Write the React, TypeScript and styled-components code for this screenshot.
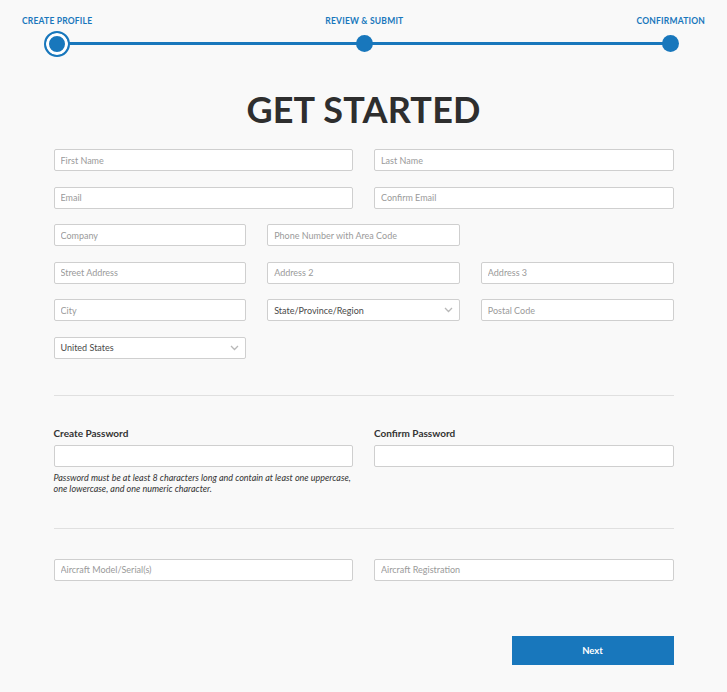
import React from 'react'
import styled, { createGlobalStyle } from 'styled-components'

const BLUE = '#1877bc'

const GlobalStyle = createGlobalStyle`
  html, body {
    margin: 0;
    padding: 0;
    background: #f9f9f9;
  }
  body {
    font-family: Lato, 'Open Sans', Arial, sans-serif;
    color: #333;
  }
  * {
    box-sizing: border-box;
  }
`

const Page = styled.div`
  width: 727px;
  min-height: 692px;
  background: #f9f9f9;
  padding-top: 16px;
`

const Stepper = styled.div`
  position: relative;
  display: flex;
  justify-content: space-between;
  padding: 0 22px;
`

const StepLine = styled.div`
  position: absolute;
  top: 26px;
  left: 57px;
  right: 57px;
  height: 3px;
  background: ${BLUE};
`

const Step = styled.div`
  position: relative;
  display: flex;
  flex-direction: column;
  align-items: center;
`

const StepLabel = styled.div`
  font-size: 8.5px;
  font-weight: 700;
  color: ${BLUE};
  letter-spacing: 0.2px;
  line-height: 10px;
  height: 10px;
  white-space: nowrap;
`

const StepDot = styled.div<{ current?: boolean }>`
  margin-top: ${({ current }) => (current ? '5px' : '9px')};
  width: ${({ current }) => (current ? '26px' : '17px')};
  height: ${({ current }) => (current ? '26px' : '17px')};
  border-radius: 50%;
  background: ${BLUE};
  border: ${({ current }) => (current ? `2px solid ${BLUE}` : 'none')};
  box-shadow: ${({ current }) => (current ? 'inset 0 0 0 3px #fff' : 'none')};
`

const Title = styled.h1`
  margin: 32px 0 0;
  text-align: center;
  font-size: 36px;
  font-weight: 700;
  letter-spacing: 0.2px;
  line-height: 40px;
  color: #2e2e2e;
`

const Form = styled.form`
  width: 620px;
  margin: 20px auto 0;
`

const Grid = styled.div`
  display: grid;
  grid-template-columns: repeat(6, 1fr);
  column-gap: 21px;
  row-gap: 15.6px;
`

const Cell = styled.div<{ span: number }>`
  grid-column: span ${({ span }) => span};
  display: flex;
  flex-direction: column;
`

const Input = styled.input`
  width: 100%;
  height: 22px;
  border: 1px solid #cfcfcf;
  border-radius: 2px;
  background: #fff;
  padding: 0 6px;
  font-family: Lato, 'Open Sans', Arial, sans-serif;
  font-size: 9px;
  color: #444;
  outline: none;
  &::placeholder {
    color: #9a9a9a;
  }
`

const SelectBox = styled.div`
  display: flex;
  align-items: center;
  justify-content: space-between;
  height: 22px;
  border: 1px solid #cfcfcf;
  border-radius: 2px;
  background: #fff;
  padding: 0 6px;
  font-size: 9px;
  color: #4a4a4a;
`

const Divider = styled.hr`
  border: none;
  border-top: 1px solid #e0e0e0;
  margin: 0;
`

const Section = styled.div<{ top: number }>`
  margin-top: ${({ top }) => top}px;
`

const Label = styled.label`
  font-size: 10px;
  font-weight: 700;
  color: #333;
  line-height: 12px;
  margin-bottom: 6px;
`

const Hint = styled.p`
  margin: 5px 0 0;
  font-size: 9px;
  font-style: italic;
  line-height: 11px;
  color: #333;
  white-space: nowrap;
`

const Actions = styled.div`
  display: flex;
  justify-content: flex-end;
  margin-top: 55px;
  padding-bottom: 27px;
`

const NextButton = styled.button`
  width: 162px;
  height: 29px;
  border: none;
  background: ${BLUE};
  color: #fff;
  font-family: Lato, 'Open Sans', Arial, sans-serif;
  font-size: 9.5px;
  font-weight: 700;
  cursor: pointer;
`

const Chevron = () => (
  <svg width="9" height="6" viewBox="0 0 9 6" fill="none">
    <path d="M1 1l3.5 3.5L8 1" stroke="#b8b8b8" strokeWidth="1.3" />
  </svg>
)

function Select({ value }: { value: string }) {
  return (
    <SelectBox>
      <span>{value}</span>
      <Chevron />
    </SelectBox>
  )
}

const steps = ['Create Profile', 'Review & Submit', 'Confirmation']

export default function App() {
  return (
    <Page>
      <GlobalStyle />
      <Stepper>
        <StepLine />
        {steps.map((s, i) => (
          <Step key={s}>
            <StepLabel>{s.toUpperCase()}</StepLabel>
            <StepDot current={i === 0} />
          </Step>
        ))}
      </Stepper>

      <Title>GET STARTED</Title>

      <Form onSubmit={(e) => e.preventDefault()}>
        <Grid>
          <Cell span={3}><Input placeholder="First Name" /></Cell>
          <Cell span={3}><Input placeholder="Last Name" /></Cell>
          <Cell span={3}><Input placeholder="Email" /></Cell>
          <Cell span={3}><Input placeholder="Confirm Email" /></Cell>
          <Cell span={2}><Input placeholder="Company" /></Cell>
          <Cell span={2}><Input placeholder="Phone Number with Area Code" /></Cell>
          <Cell span={2} />
          <Cell span={2}><Input placeholder="Street Address" /></Cell>
          <Cell span={2}><Input placeholder="Address 2" /></Cell>
          <Cell span={2}><Input placeholder="Address 3" /></Cell>
          <Cell span={2}><Input placeholder="City" /></Cell>
          <Cell span={2}><Select value="State/Province/Region" /></Cell>
          <Cell span={2}><Input placeholder="Postal Code" /></Cell>
          <Cell span={2}><Select value="United States" /></Cell>
        </Grid>

        <Section top={36}>
          <Divider />
        </Section>

        <Section top={31}>
          <Grid>
            <Cell span={3}>
              <Label>Create Password</Label>
              <Input type="password" />
              <Hint>
                Password must be at least 8 characters long and contain at least one uppercase,
                <br />
                one lowercase, and one numeric character.
              </Hint>
            </Cell>
            <Cell span={3}>
              <Label>Confirm Password</Label>
              <Input type="password" />
            </Cell>
          </Grid>
        </Section>

        <Section top={34}>
          <Divider />
        </Section>

        <Section top={30}>
          <Grid>
            <Cell span={3}><Input placeholder="Aircraft Model/Serial(s)" /></Cell>
            <Cell span={3}><Input placeholder="Aircraft Registration" /></Cell>
          </Grid>
        </Section>

        <Actions>
          <NextButton type="submit">Next</NextButton>
        </Actions>
      </Form>
    </Page>
  )
}
